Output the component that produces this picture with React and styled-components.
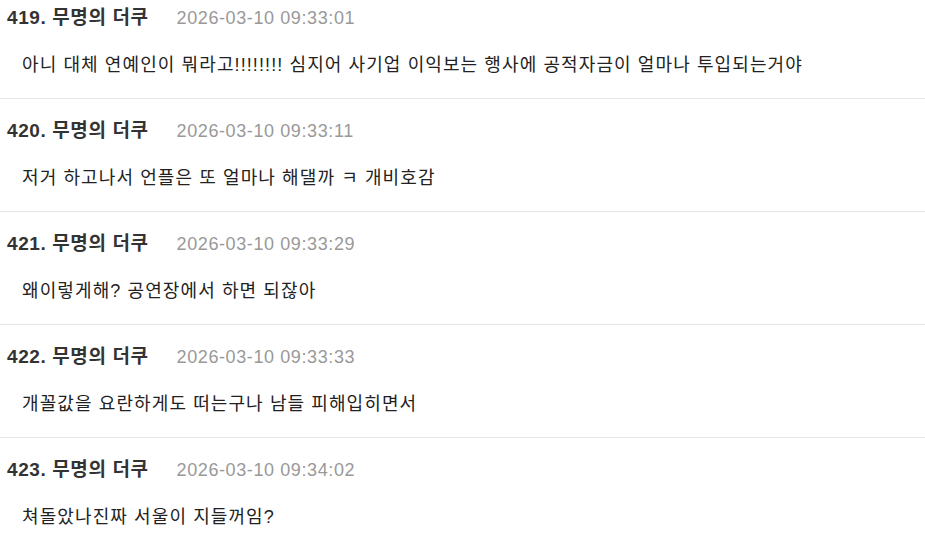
import React from "react";
import styled, { createGlobalStyle } from "styled-components";

const Global = createGlobalStyle`
  html, body { margin: 0; padding: 0; background: #fff; }
  body { font-family: "Liberation Sans", "Noto Sans CJK KR", sans-serif; -webkit-font-smoothing: antialiased; }
`;

const List = styled.div`
  display: flex;
  flex-direction: column;
  width: 925px;
`;

const Post = styled.div`
  display: flex;
  flex-direction: column;
  gap: 25px;
  padding: 22px 0 21px;
  border-bottom: 1px solid #e6e6e6;
  &:first-child { padding-top: 8px; }
`;

const Header = styled.div`
  display: flex;
  align-items: baseline;
  gap: 28px;
  padding-left: 7px;
  height: 20px;
  line-height: 20px;
`;

const Author = styled.span`
  font-size: 19px;
  font-weight: 700;
  letter-spacing: 0.6px;
  color: #333;
`;

const Time = styled.span`
  font-size: 18px;
  letter-spacing: 0.6px;
  color: #999;
`;

const Body = styled.div`
  padding-left: 22px;
  font-size: 18px;
  letter-spacing: 1.1px;
  line-height: 24px;
  color: #222;
`;

const posts = [
  { n: 419, t: "2026-03-10 09:33:01", b: "아니 대체 연예인이 뭐라고!!!!!!!! 심지어 사기업 이익보는 행사에 공적자금이 얼마나 투입되는거야" },
  { n: 420, t: "2026-03-10 09:33:11", b: "저거 하고나서 언플은 또 얼마나 해댈까 ㅋ 개비호감" },
  { n: 421, t: "2026-03-10 09:33:29", b: "왜이렇게해? 공연장에서 하면 되잖아" },
  { n: 422, t: "2026-03-10 09:33:33", b: "개꼴값을 요란하게도 떠는구나 남들 피해입히면서" },
  { n: 423, t: "2026-03-10 09:34:02", b: "쳐돌았나진짜 서울이 지들꺼임?" },
];

export default function App() {
  return (
    <>
      <Global />
      <List>
        {posts.map((p) => (
          <Post key={p.n}>
            <Header>
              <Author>{p.n}. 무명의 더쿠</Author>
              <Time>{p.t}</Time>
            </Header>
            <Body>{p.b}</Body>
          </Post>
        ))}
      </List>
    </>
  );
}
